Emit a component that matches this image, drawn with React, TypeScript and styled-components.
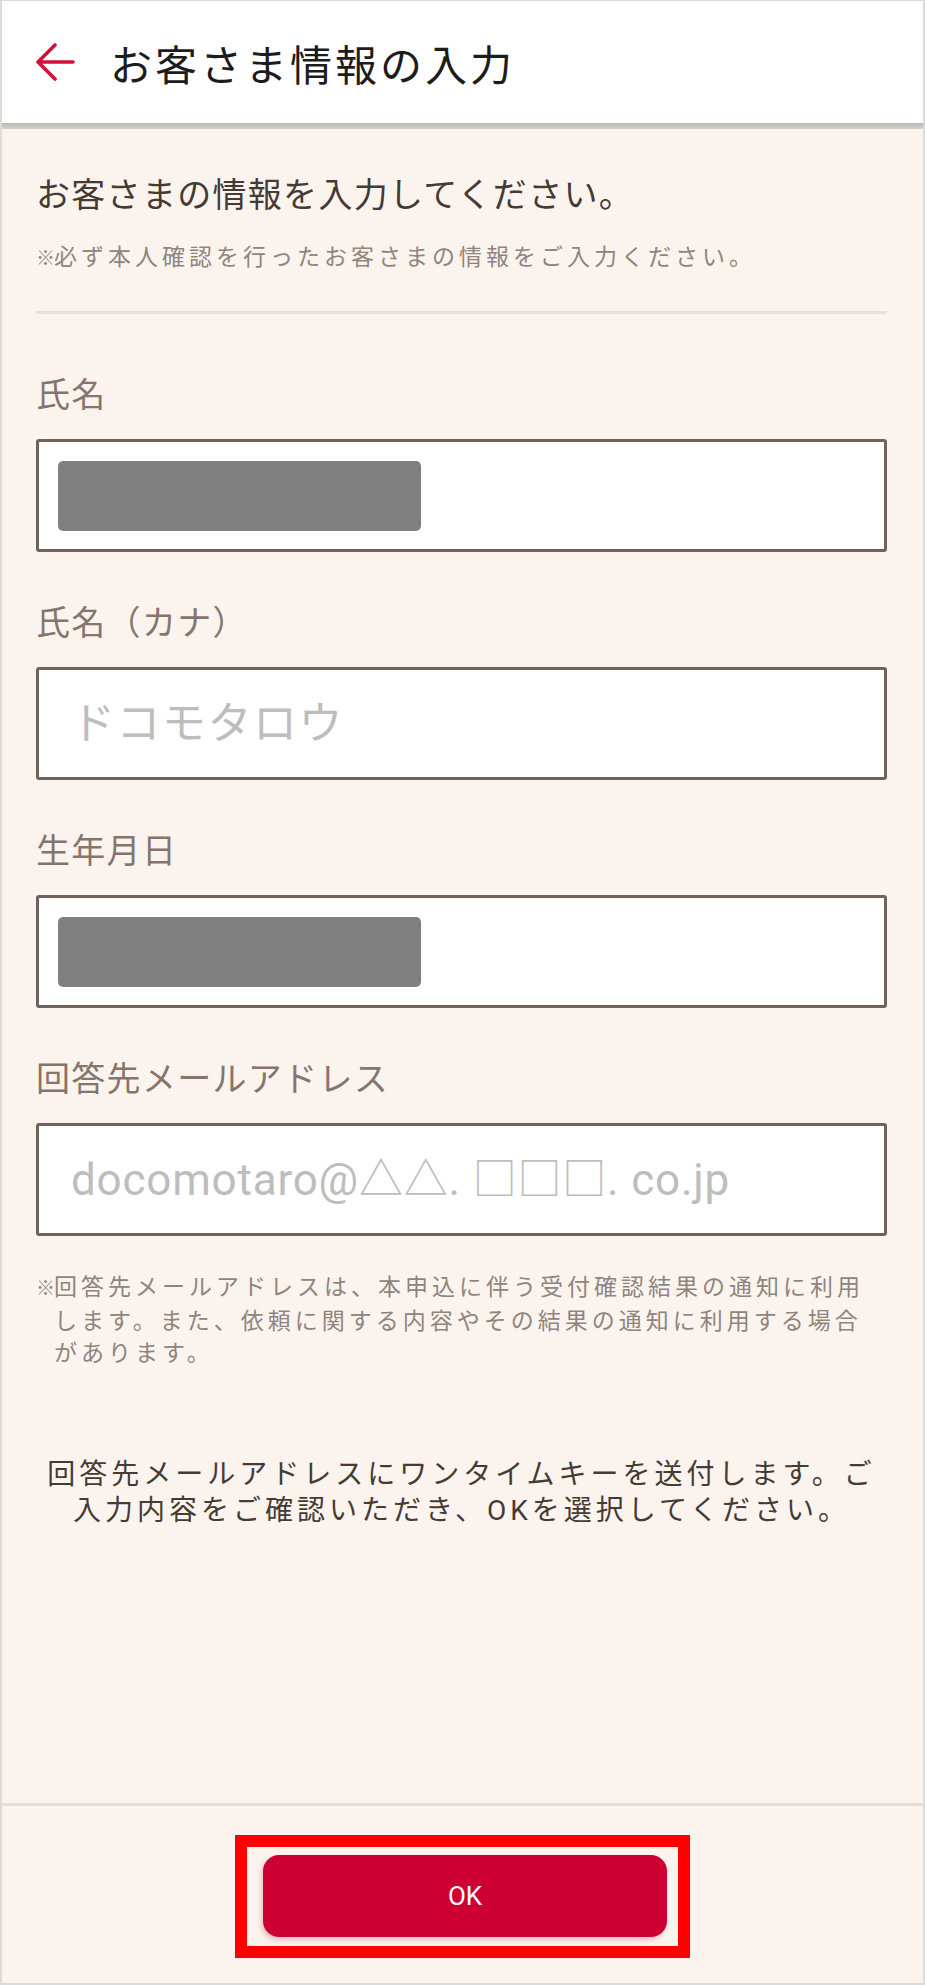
import styled, { createGlobalStyle } from "styled-components";

const GlobalStyle = createGlobalStyle`
  html, body {
    margin: 0;
    padding: 0;
    background: #ffffff;
  }
  body {
    font-family: Roboto, "Noto Sans CJK JP", sans-serif;
  }
  * {
    box-sizing: border-box;
  }
`;

const Page = styled.div`
  width: 925px;
  min-height: 1985px;
  display: flex;
  flex-direction: column;
  border: 2px solid #dddbd9;
  border-top-width: 1px;
  background: #fbf4ee;
`;

const Header = styled.header`
  height: 122px;
  display: flex;
  align-items: center;
  gap: 35px;
  padding-left: 33px;
  background: #ffffff;
`;

const HeaderShadow = styled.div`
  height: 6px;
  background: linear-gradient(#b9b6b2, #d6d1cc);
`;

const Title = styled.h1`
  margin: 0;
  font-size: 42px;
  font-weight: 400;
  letter-spacing: 3px;
  color: #1c1c1c;
  font-family: "Noto Sans CJK JP", sans-serif;
`;

const Main = styled.main`
  flex: 1;
  padding: 42px 36px 0 34px;
  font-family: "Noto Sans CJK JP", sans-serif;
`;

const Lead = styled.p`
  margin: 0;
  font-size: 34px;
  line-height: 44px;
  letter-spacing: 1.3px;
  color: #453a34;
`;

const SmallNote = styled.p`
  margin: 23px 0 0;
  font-size: 23px;
  line-height: 34px;
  letter-spacing: 4px;
  color: #8f847e;
`;

const Mark = styled.span`
  font-size: 19px;
  letter-spacing: -1px;
`;

const Divider = styled.hr`
  margin: 37px 0 0;
  border: none;
  height: 3px;
  background: #e9e0d7;
`;

const Fields = styled.div`
  margin-top: 59px;
  display: flex;
  flex-direction: column;
  gap: 49px;
`;

const Field = styled.div`
  display: flex;
  flex-direction: column;
  gap: 26px;
`;

const Label = styled.label`
  font-size: 34px;
  line-height: 40px;
  letter-spacing: 1.3px;
  color: #85756d;
`;

const FieldBox = styled.div`
  height: 113px;
  display: flex;
  align-items: center;
  padding: 0 19px;
  border: 3px solid #6e625b;
  border-radius: 3px;
  background: #ffffff;
`;

const Redacted = styled.div`
  width: 363px;
  height: 70px;
  border-radius: 5px;
  background: #808080;
`;

const TextInput = styled.input<{ $spacing: number }>`
  width: 100%;
  padding: 0 0 0 13px;
  border: none;
  outline: none;
  background: transparent;
  font-family: Roboto, "Noto Sans CJK JP", sans-serif;
  font-size: 44px;
  letter-spacing: ${(p) => p.$spacing}px;
  color: #333333;
  &::placeholder {
    color: #bdbdbd;
  }
`;

const Footnote = styled.p`
  margin: 33px 0 0;
  padding-left: 18px;
  text-indent: -18px;
  font-size: 23px;
  line-height: 32px;
  letter-spacing: 4px;
  color: #8f847e;
`;

const Notice = styled.p`
  margin: 90px 0 0;
  text-align: center;
  font-family: Roboto, "Noto Sans CJK JP", sans-serif;
  font-size: 28px;
  line-height: 36px;
  letter-spacing: 4px;
  color: #453b35;
`;

const Footer = styled.footer`
  display: flex;
  justify-content: center;
  padding: 29px 0 25px;
  border-top: 3px solid #e6ddd4;
`;

const Highlight = styled.div`
  border: 12px solid #ff0000;
  padding: 8px 11px 9px 16px;
`;

const OkButton = styled.button`
  width: 404px;
  height: 82px;
  border: none;
  border-radius: 16px;
  background: #cc0033;
  color: #ffffff;
  font-family: Roboto, sans-serif;
  font-size: 26px;
  font-weight: 400;
  box-shadow: -2px 3px 5px rgba(200, 30, 60, 0.25);
  cursor: pointer;
`;

function BackArrow() {
  return (
    <svg width="40" height="38" viewBox="0 0 40 38" fill="none">
      <path
        d="M20 2 L3 19 L20 36 M3 19 H38"
        stroke="#d2103c"
        strokeWidth="3.6"
        strokeLinecap="round"
        strokeLinejoin="round"
      />
    </svg>
  );
}

export default function App() {
  return (
    <>
      <GlobalStyle />
      <Page>
        <Header>
          <BackArrow />
          <Title>お客さま情報の入力</Title>
        </Header>
        <HeaderShadow />
        <Main>
          <Lead>お客さまの情報を入力してください。</Lead>
          <SmallNote>
            <Mark>※</Mark>必ず本人確認を行ったお客さまの情報をご入力ください。
          </SmallNote>
          <Divider />
          <Fields>
            <Field>
              <Label>氏名</Label>
              <FieldBox>
                <Redacted />
              </FieldBox>
            </Field>
            <Field>
              <Label>氏名（カナ）</Label>
              <FieldBox>
                <TextInput $spacing={1.5} placeholder="ドコモタロウ" />
              </FieldBox>
            </Field>
            <Field>
              <Label>生年月日</Label>
              <FieldBox>
                <Redacted />
              </FieldBox>
            </Field>
            <Field>
              <Label>回答先メールアドレス</Label>
              <FieldBox>
                <TextInput
                  $spacing={0.8}
                  type="email"
                  placeholder="docomotaro@△△. □□□. co.jp"
                />
              </FieldBox>
            </Field>
          </Fields>
          <Footnote>
            <Mark>※</Mark>回答先メールアドレスは、本申込に伴う受付確認結果の通知に利用
            <br />
            します。また、依頼に関する内容やその結果の通知に利用する場合
            <br />
            があります。
          </Footnote>
          <Notice>
            回答先メールアドレスにワンタイムキーを送付します。ご
            <br />
            入力内容をご確認いただき、OKを選択してください。
          </Notice>
        </Main>
        <Footer>
          <Highlight>
            <OkButton>OK</OkButton>
          </Highlight>
        </Footer>
      </Page>
    </>
  );
}
